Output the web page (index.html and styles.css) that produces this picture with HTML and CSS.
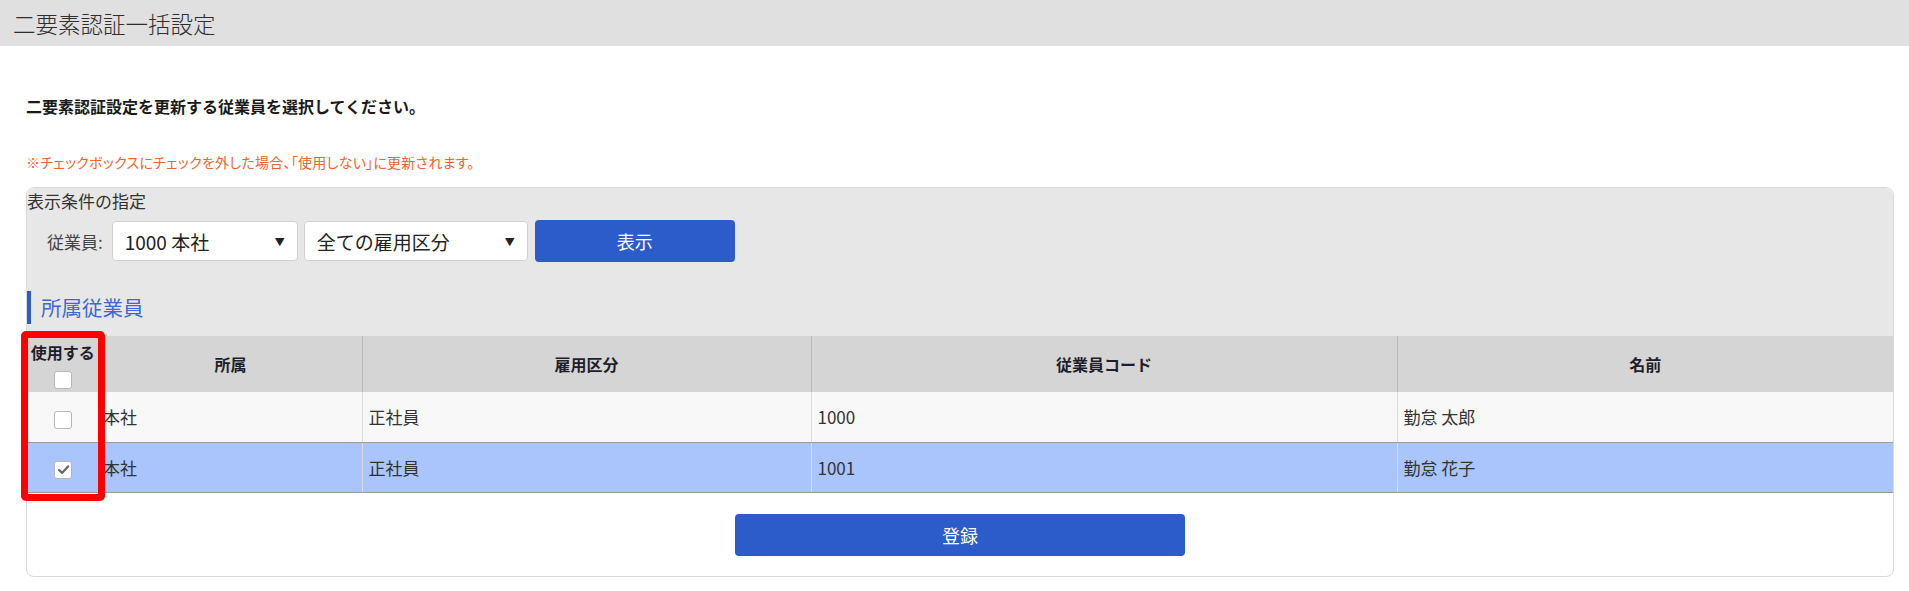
FILE: index.html
```html
<!DOCTYPE html>
<html lang="ja">
<head>
<meta charset="utf-8">
<title>二要素認証一括設定</title>
<link rel="stylesheet" href="styles.css">
</head>
<body>
<header class="titlebar">二要素認証一括設定</header>
<main class="content">
  <p class="lead">二要素認証設定を更新する従業員を選択してください。</p>
  <p class="note">※チェックボックスにチェックを外した場合、「使用しない」に更新されます。</p>
  <section class="panel">
    <div class="panel-top">
      <div class="cond-label">表示条件の指定</div>
      <div class="filter-row">
        <span class="filter-label">従業員:</span>
        <div class="select sel-emp"><span>1000 本社</span><span class="arrow">▼</span></div>
        <div class="select sel-type"><span>全ての雇用区分</span><span class="arrow">▼</span></div>
        <button class="btn btn-show">表示</button>
      </div>
      <h2 class="section-title">所属従業員</h2>
    </div>
    <div class="table-wrap">
      <table class="emp-table">
        <colgroup>
          <col class="c1"><col class="c2"><col class="c3"><col class="c4"><col class="c5">
        </colgroup>
        <thead>
          <tr>
            <th class="th-use"><div class="use-label">使用する</div><span class="cb"></span></th>
            <th>所属</th>
            <th>雇用区分</th>
            <th>従業員コード</th>
            <th>名前</th>
          </tr>
        </thead>
        <tbody>
          <tr class="row">
            <td class="td-cb"><span class="cb"></span></td>
            <td class="td-first">本社</td>
            <td>正社員</td>
            <td>1000</td>
            <td>勤怠 太郎</td>
          </tr>
          <tr class="row selected">
            <td class="td-cb"><span class="cb checked"><svg class="check" viewBox="0 0 16 16" width="13" height="13"><path d="M2.5 8.6 L6.2 12.2 L13.6 4.2" fill="none" stroke="#676767" stroke-width="2.8" stroke-linecap="round" stroke-linejoin="round"/></svg></span></td>
            <td class="td-first">本社</td>
            <td>正社員</td>
            <td>1001</td>
            <td>勤怠 花子</td>
          </tr>
        </tbody>
      </table>
      <div class="highlight"></div>
    </div>
    <div class="panel-bottom">
      <button class="btn btn-register">登録</button>
    </div>
  </section>
</main>
</body>
</html>
```

FILE: styles.css
```css
* { box-sizing: border-box; }
body {
  margin: 0;
  background: #fff;
  font-family: "Noto Sans CJK JP", "Noto Sans", sans-serif;
  color: #333;
}
.titlebar {
  height: 46px;
  line-height: 46px;
  background: #e0e0e0;
  padding-left: 13px;
  font-size: 22.5px;
  font-weight: 300;
  color: #2e2e2e;
}
.content {
  padding: 0 15px 0 26px;
}
.lead {
  margin: 48px 0 0;
  font-size: 16px;
  line-height: 24px;
  font-weight: 700;
  color: #1a1a1a;
}
.note {
  margin: 34px 0 0;
  font-size: 14px;
  line-height: 20px;
  letter-spacing: 0.25px;
  color: #ec6430;
  font-feature-settings: "palt";
}
.panel {
  margin-top: 15px;
  border: 1px solid #d9d9d9;
  border-radius: 8px;
  background: #fff;
}
.panel-top {
  background: #e8e7e7;
  border-radius: 8px 8px 0 0;
  padding: 1px 0 12px 0;
}
.cond-label {
  font-size: 17px;
  line-height: 24px;
  color: #333;
}
.filter-row {
  display: flex;
  align-items: center;
  gap: 6px;
  margin-top: 7px;
  padding-left: 20px;
}
.filter-label {
  font-size: 17px;
  color: #444;
  margin-right: 3px;
}
.select {
  height: 40px;
  background: #fff;
  border: 1px solid #d0d0d0;
  border-radius: 4px;
  display: flex;
  align-items: center;
  justify-content: space-between;
  padding: 0 12px 0 12px;
  font-size: 19px;
  color: #222;
}
.sel-emp { width: 186px; }
.sel-type { width: 224px; }
.arrow {
  font-size: 10px;
  color: #222;
}
.btn {
  border: none;
  background: #2b5cc9;
  color: #fff;
  border-radius: 4px;
  font-family: inherit;
  font-size: 18px;
  cursor: pointer;
}
.btn-show {
  width: 200px;
  height: 42px;
  margin-left: 1px;
}
.section-title {
  margin: 29px 0 0;
  height: 33px;
  line-height: 33px;
  border-left: 4px solid #2b5cc9;
  padding-left: 10px;
  font-size: 20.5px;
  font-weight: 400;
  color: #3c68cf;
}
.table-wrap {
  position: relative;
}
.emp-table {
  width: 100%;
  border-collapse: collapse;
  table-layout: fixed;
  font-size: 17px;
}
.c1 { width: 72px; }
.c2 { width: 263px; }
.c3 { width: 449px; }
.c4 { width: 586px; }
.emp-table th {
  background: #d5d5d5;
  height: 56px;
  font-size: 16px;
  font-weight: 700;
  color: #1e1e2a;
  border-left: 1px solid #b9b9b9;
  padding: 0;
}
.emp-table th:first-child { border-left: none; }
.th-use {
  vertical-align: top;
  padding-top: 5px !important;
}
.use-label {
  line-height: 22px;
}
.th-use .cb {
  margin-top: 4px;
}
.emp-table td {
  height: 50px;
  padding: 0 0 0 6px;
  color: #333;
  border-left: 1px solid #dcdcdc;
  border-bottom: 1px solid #9a9a9a;
}
.emp-table td:first-child { border-left: none; }
.emp-table td.td-cb {
  padding: 0;
  text-align: center;
}
.emp-table td.td-first {
  border-left: none;
  padding-left: 4px;
}
.row { background: #f8f8f8; }
.row.selected { background: #a9c5fb; }
.cb {
  display: inline-flex;
  align-items: center;
  justify-content: center;
  width: 18px;
  height: 18px;
  background: #fff;
  border: 1px solid #b8b8b8;
  border-radius: 3px;
  vertical-align: middle;
}
.check {
  display: block;
}
.highlight {
  position: absolute;
  left: -6px;
  top: -5px;
  width: 84px;
  height: 170px;
  border: 7px solid #ff0000;
  border-radius: 5px;
  pointer-events: none;
}
.panel-bottom {
  display: flex;
  justify-content: center;
  padding: 21px 0 20px;
}
.btn-register {
  width: 450px;
  height: 42px;
}
```
